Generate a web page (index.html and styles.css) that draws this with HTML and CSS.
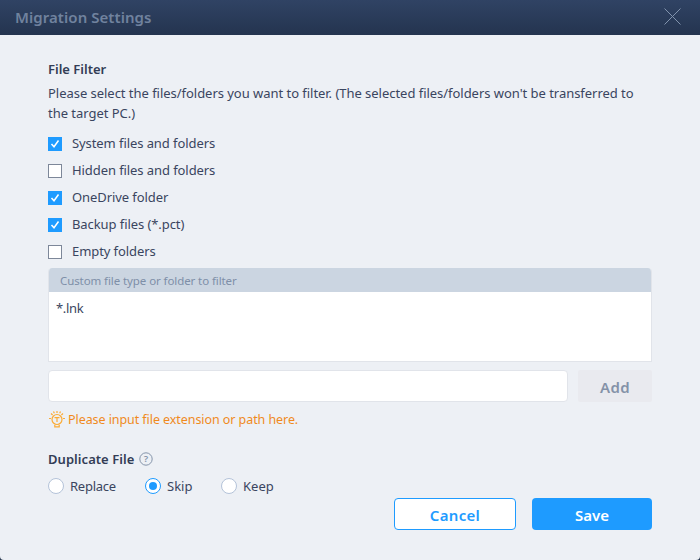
FILE: index.html
```html
<!DOCTYPE html>
<html lang="en">
<head>
<meta charset="utf-8">
<title>Migration Settings</title>
<link rel="stylesheet" href="styles.css">
</head>
<body>
<div class="dialog">
  <header class="titlebar">
    <span class="title">Migration Settings</span>
    <svg class="close" width="17" height="17" viewBox="0 0 17 17"><path d="M0.5 0.5L16.5 16.5M16.5 0.5L0.5 16.5" stroke="#8193ad" stroke-width="1" fill="none"/></svg>
  </header>
  <main class="content">
    <h2 class="heading">File Filter</h2>
    <p class="desc">Please select the files/folders you want to filter. (The selected files/folders won't be transferred to the target PC.)</p>
    <ul class="checks">
      <li class="check"><span class="box on"><svg width="14" height="14" viewBox="0 0 14 14"><path d="M3.5 7L6 9.8L10.5 3.5" stroke="#fff" stroke-width="1.5" fill="none"/></svg></span>System files and folders</li>
      <li class="check"><span class="box"></span>Hidden files and folders</li>
      <li class="check"><span class="box on"><svg width="14" height="14" viewBox="0 0 14 14"><path d="M3.5 7L6 9.8L10.5 3.5" stroke="#fff" stroke-width="1.5" fill="none"/></svg></span>OneDrive folder</li>
      <li class="check"><span class="box on"><svg width="14" height="14" viewBox="0 0 14 14"><path d="M3.5 7L6 9.8L10.5 3.5" stroke="#fff" stroke-width="1.5" fill="none"/></svg></span>Backup files (*.pct)</li>
      <li class="check"><span class="box"></span>Empty folders</li>
    </ul>
    <section class="panel">
      <div class="panel-head">Custom file type or folder to filter</div>
      <div class="panel-body">*.lnk</div>
    </section>
    <div class="add-row">
      <div class="input"></div>
      <div class="add">Add</div>
    </div>
    <div class="hint">
      <svg width="18" height="18" viewBox="0 0 18 18" fill="none" stroke="#fbab35" stroke-width="1.2"><circle cx="9" cy="9.5" r="5"/><path d="M6.8 15V16.8H11.2V15M6.5 7.6H11.5M9 7.6V12M1 8.5H3M15 8.5H17M3 3.5L4.6 5M15 3.5L13.4 5M9 1V3M5.5 1.5L6.3 3.2M12.5 1.5L11.7 3.2"/></svg>
      <span>Please input file extension or path here.</span>
    </div>
    <h2 class="heading dup">Duplicate File
      <svg class="help" width="14" height="14" viewBox="0 0 14 14"><circle cx="7" cy="7" r="6.2" fill="none" stroke="#8494aa" stroke-width="1"/><text x="7" y="10.2" text-anchor="middle" class="help-q">?</text></svg>
    </h2>
    <div class="radios">
      <label class="radio r1"><span class="dot"></span>Replace</label>
      <label class="radio r2"><span class="dot on"></span>Skip</label>
      <label class="radio"><span class="dot"></span>Keep</label>
    </div>
    <div class="actions">
      <div class="btn cancel">Cancel</div>
      <div class="btn save">Save</div>
    </div>
  </main>
</div>
</body>
</html>
```
FILE: styles.css
```css
* { box-sizing: border-box; }
html, body { margin: 0; padding: 0; }
body { width: 700px; height: 560px; overflow: hidden; background: #2a3a50; font-family: "Noto Sans", "Open Sans", sans-serif; font-size: 13px; color: #3a4560; }
.dialog { width: 700px; height: 560px; display: flex; flex-direction: column; background: #edf0f5; border-radius: 0 0 4px 4px; }
.titlebar { height: 35px; flex: none; position: relative; background: linear-gradient(#304364, #24344f); display: flex; align-items: center; padding: 0 0 1px 15px; }
.title { font-size: 15px; font-weight: 600; color: #70829e; line-height: 20px; letter-spacing: 0.06px; }
.close { position: absolute; left: 664px; top: 8px; }
.content { padding: 25px 48px 0; }
.heading { margin: 0; font-size: 13px; font-weight: 600; line-height: 18px; color: #333d55; }
.desc { margin: 5px 0 0; line-height: 20px; width: 604px; letter-spacing: -0.034px; }
.checks { list-style: none; margin: 7px 0 0; padding: 0; letter-spacing: -0.08px; }
.check { height: 27px; display: flex; align-items: center; line-height: 27px; }
.box { width: 14px; height: 14px; margin-right: 10px; border: 1px solid #7d8799; background: #fff; flex: none; position: relative; }
.box.on { background: #1e9bff; border: 0; }
.box svg { display: block; }
.panel { margin-top: 3px; border: 1px solid #e1e4ea; border-top: 0; border-radius: 4px 4px 0 0; background: #fff; overflow: hidden; }
.panel-head { height: 24px; background: #cbd5e1; color: #7e8fa8; font-size: 11.5px; letter-spacing: -0.09px; line-height: 24px; padding: 1px 0 0 12px; margin: 0 -1px; }
.panel-body { height: 69px; padding: 6px 7px; line-height: 20px; letter-spacing: -0.3px; }
.add-row { display: flex; justify-content: space-between; margin-top: 8px; }
.input { width: 520px; height: 32px; background: #fff; border: 1px solid #e1e4ea; border-radius: 4px; }
.add { width: 74px; height: 32px; background: #e9eaef; border-radius: 2px; color: #8492a8; font-size: 15px; font-weight: 600; letter-spacing: 0.3px; text-align: center; line-height: 32px; padding-top: 1px; }
.hint { display: flex; align-items: center; gap: 2px; margin-top: 7px; height: 20px; color: #f08a1d; font-size: 12.5px; letter-spacing: -0.07px; }
.hint svg { flex: none; }
.dup { margin-top: 20px; display: flex; align-items: center; gap: 5px; height: 20px; letter-spacing: 0.05px; }
.help { display: block; }
.help-q { font-size: 9.5px; fill: #8494aa; font-family: "Noto Sans", sans-serif; }
.radios { display: flex; margin-top: 5px; height: 24px; align-items: center; }
.radio { display: flex; align-items: center; }
.r1 { width: 97px; letter-spacing: -0.25px; }
.r2 { width: 76px; }
.dot { width: 16px; height: 16px; border-radius: 50%; border: 1px solid #b4c3d9; background: #fff; margin-right: 6px; position: relative; flex: none; }
.dot.on { border-color: #1e9bff; }
.dot.on::after { content: ""; position: absolute; left: 3px; top: 3px; width: 8px; height: 8px; border-radius: 50%; background: #1e9bff; }
.actions { display: flex; justify-content: flex-end; gap: 16px; margin-top: 0; }
.btn { width: 122px; height: 32px; border-radius: 4px; font-size: 15px; font-weight: 600; text-align: center; line-height: 32px; padding-top: 1px; }
.cancel { background: #fff; border: 1px solid #1e9bff; color: #1e9bff; line-height: 30px; letter-spacing: 0.3px; }
.save { width: 120px; background: #1e9bff; color: #fff; }
```
